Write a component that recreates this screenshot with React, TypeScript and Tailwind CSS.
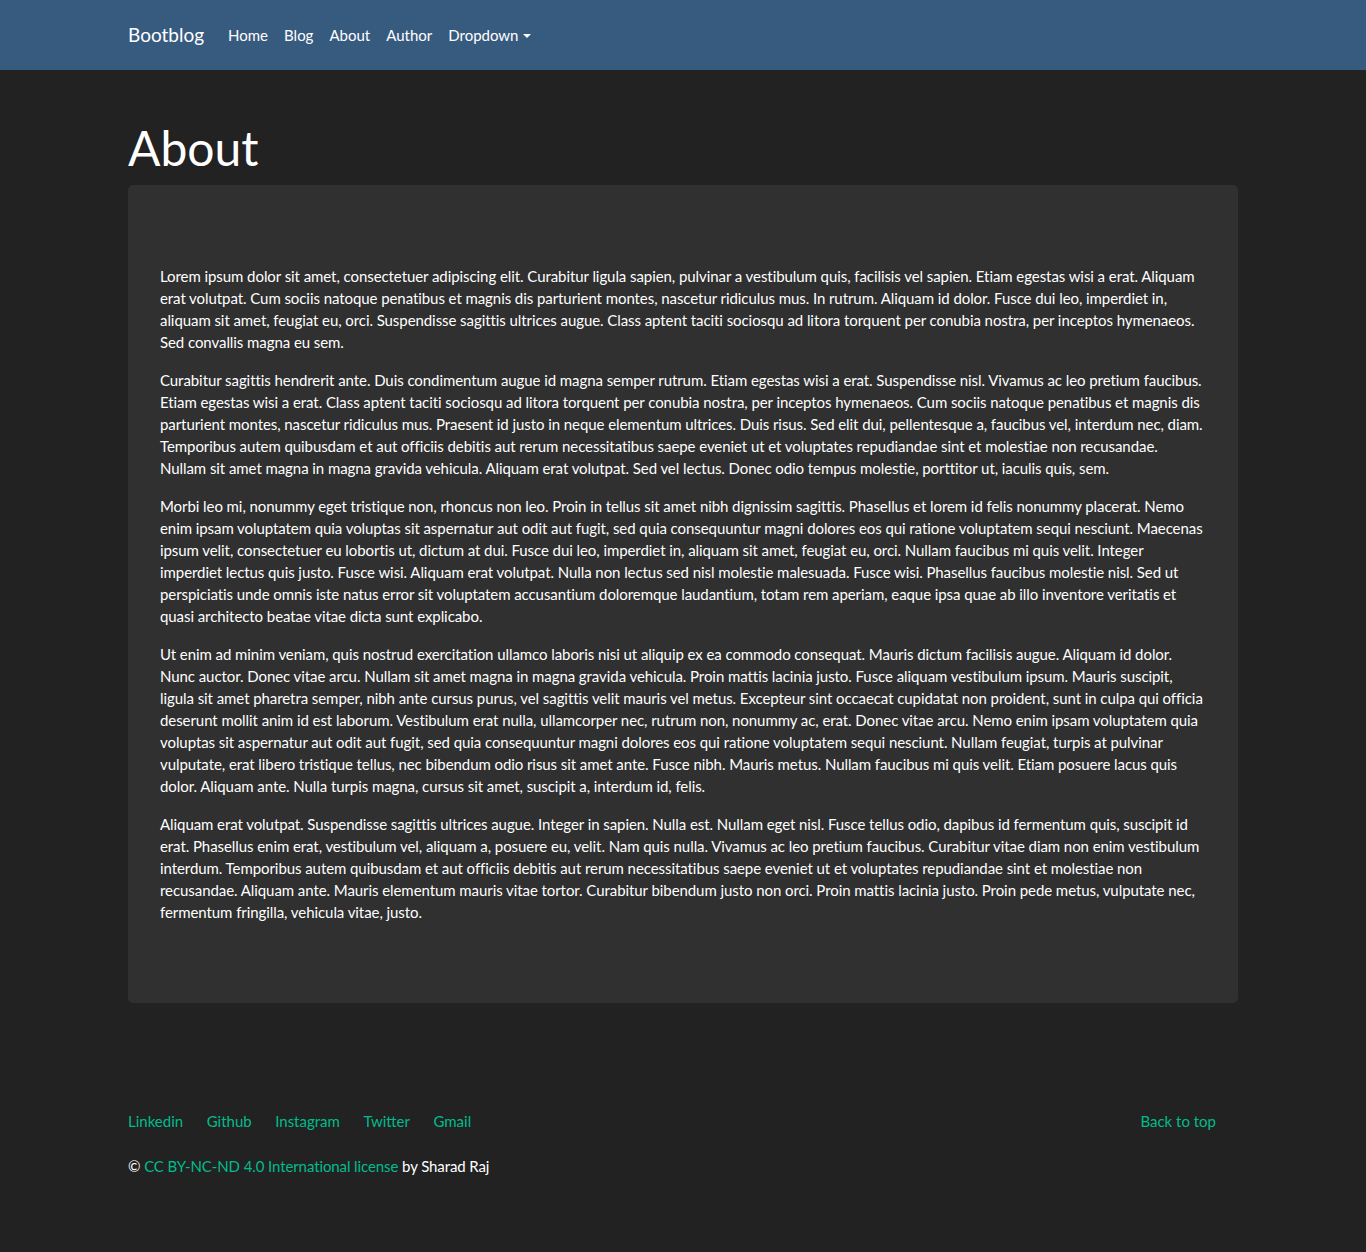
const NAV_LINKS = ["Home", "Blog", "About", "Author"];

const FOOTER_LINKS = ["Linkedin", "Github", "Instagram", "Twitter", "Gmail"];

const PARAGRAPHS = [
  "Lorem ipsum dolor sit amet, consectetuer adipiscing elit. Curabitur ligula sapien, pulvinar a vestibulum quis, facilisis vel sapien. Etiam egestas wisi a erat. Aliquam erat volutpat. Cum sociis natoque penatibus et magnis dis parturient montes, nascetur ridiculus mus. In rutrum. Aliquam id dolor. Fusce dui leo, imperdiet in, aliquam sit amet, feugiat eu, orci. Suspendisse sagittis ultrices augue. Class aptent taciti sociosqu ad litora torquent per conubia nostra, per inceptos hymenaeos. Sed convallis magna eu sem.",
  "Curabitur sagittis hendrerit ante. Duis condimentum augue id magna semper rutrum. Etiam egestas wisi a erat. Suspendisse nisl. Vivamus ac leo pretium faucibus. Etiam egestas wisi a erat. Class aptent taciti sociosqu ad litora torquent per conubia nostra, per inceptos hymenaeos. Cum sociis natoque penatibus et magnis dis parturient montes, nascetur ridiculus mus. Praesent id justo in neque elementum ultrices. Duis risus. Sed elit dui, pellentesque a, faucibus vel, interdum nec, diam. Temporibus autem quibusdam et aut officiis debitis aut rerum necessitatibus saepe eveniet ut et voluptates repudiandae sint et molestiae non recusandae. Nullam sit amet magna in magna gravida vehicula. Aliquam erat volutpat. Sed vel lectus. Donec odio tempus molestie, porttitor ut, iaculis quis, sem.",
  "Morbi leo mi, nonummy eget tristique non, rhoncus non leo. Proin in tellus sit amet nibh dignissim sagittis. Phasellus et lorem id felis nonummy placerat. Nemo enim ipsam voluptatem quia voluptas sit aspernatur aut odit aut fugit, sed quia consequuntur magni dolores eos qui ratione voluptatem sequi nesciunt. Maecenas ipsum velit, consectetuer eu lobortis ut, dictum at dui. Fusce dui leo, imperdiet in, aliquam sit amet, feugiat eu, orci. Nullam faucibus mi quis velit. Integer imperdiet lectus quis justo. Fusce wisi. Aliquam erat volutpat. Nulla non lectus sed nisl molestie malesuada. Fusce wisi. Phasellus faucibus molestie nisl. Sed ut perspiciatis unde omnis iste natus error sit voluptatem accusantium doloremque laudantium, totam rem aperiam, eaque ipsa quae ab illo inventore veritatis et quasi architecto beatae vitae dicta sunt explicabo.",
  "Ut enim ad minim veniam, quis nostrud exercitation ullamco laboris nisi ut aliquip ex ea commodo consequat. Mauris dictum facilisis augue. Aliquam id dolor. Nunc auctor. Donec vitae arcu. Nullam sit amet magna in magna gravida vehicula. Proin mattis lacinia justo. Fusce aliquam vestibulum ipsum. Mauris suscipit, ligula sit amet pharetra semper, nibh ante cursus purus, vel sagittis velit mauris vel metus. Excepteur sint occaecat cupidatat non proident, sunt in culpa qui officia deserunt mollit anim id est laborum. Vestibulum erat nulla, ullamcorper nec, rutrum non, nonummy ac, erat. Donec vitae arcu. Nemo enim ipsam voluptatem quia voluptas sit aspernatur aut odit aut fugit, sed quia consequuntur magni dolores eos qui ratione voluptatem sequi nesciunt. Nullam feugiat, turpis at pulvinar vulputate, erat libero tristique tellus, nec bibendum odio risus sit amet ante. Fusce nibh. Mauris metus. Nullam faucibus mi quis velit. Etiam posuere lacus quis dolor. Aliquam ante. Nulla turpis magna, cursus sit amet, suscipit a, interdum id, felis.",
  "Aliquam erat volutpat. Suspendisse sagittis ultrices augue. Integer in sapien. Nulla est. Nullam eget nisl. Fusce tellus odio, dapibus id fermentum quis, suscipit id erat. Phasellus enim erat, vestibulum vel, aliquam a, posuere eu, velit. Nam quis nulla. Vivamus ac leo pretium faucibus. Curabitur vitae diam non enim vestibulum interdum. Temporibus autem quibusdam et aut officiis debitis aut rerum necessitatibus saepe eveniet ut et voluptates repudiandae sint et molestiae non recusandae. Aliquam ante. Mauris elementum mauris vitae tortor. Curabitur bibendum justo non orci. Proin mattis lacinia justo. Proin pede metus, vulputate nec, fermentum fringilla, vehicula vitae, justo.",
];

const Navbar = () => (
  <nav className="h-[70px] bg-[#375a7f]">
    <div className="mx-auto flex h-full w-[1110px] items-center">
      <a href="#" className="mr-4 text-[19px] leading-[30px] text-white">
        Bootblog
      </a>
      <ul className="flex items-center">
        {NAV_LINKS.map((label) => (
          <li key={label}>
            <a href="#" className="block px-2 text-[15px] leading-[22px] text-white">
              {label}
            </a>
          </li>
        ))}
        <li>
          <a href="#" className="flex items-center px-2 text-[15px] leading-[22px] text-white">
            Dropdown
            {/* caret */}
            <span className="ml-[4px] mt-[1px] h-0 w-0 border-x-[4px] border-t-[4px] border-x-transparent border-t-white" />
          </a>
        </li>
      </ul>
    </div>
  </nav>
);

const Footer = () => (
  <footer className="mx-auto w-[1110px] pt-[107px] pb-[76px] text-[15px] leading-[22px]">
    <div className="flex items-center justify-between">
      <div className="flex gap-[23.5px]">
        {FOOTER_LINKS.map((label) => (
          <a key={label} href="#" className="text-[#00bc8c]">
            {label}
          </a>
        ))}
      </div>
      <a href="#" className="pr-[22px] text-[#00bc8c]">
        Back to top
      </a>
    </div>
    <p className="mt-[23px] text-white tracking-[-0.1px]">
      ©{" "}
      <a href="#" className="text-[#00bc8c]">
        CC BY-NC-ND 4.0 International license
      </a>{" "}
      by Sharad Raj
    </p>
  </footer>
);

export default function App() {
  return (
    <div className="min-h-screen bg-[#222222] font-['Lato','Liberation_Sans',sans-serif] text-white">
      <Navbar />
      <main className="mx-auto w-[1110px] pt-[49px]">
        <h1 className="mb-2 text-[48px] leading-[1.2] font-normal">About</h1>
        <div className="rounded-[5px] bg-[#303030] px-8 pt-20 pb-16">
          {PARAGRAPHS.map((text, i) => (
            <p key={i} className="mb-4 text-[15px] leading-[22px] tracking-[-0.07px]">
              {text}
            </p>
          ))}
        </div>
      </main>
      <Footer />
    </div>
  );
}
